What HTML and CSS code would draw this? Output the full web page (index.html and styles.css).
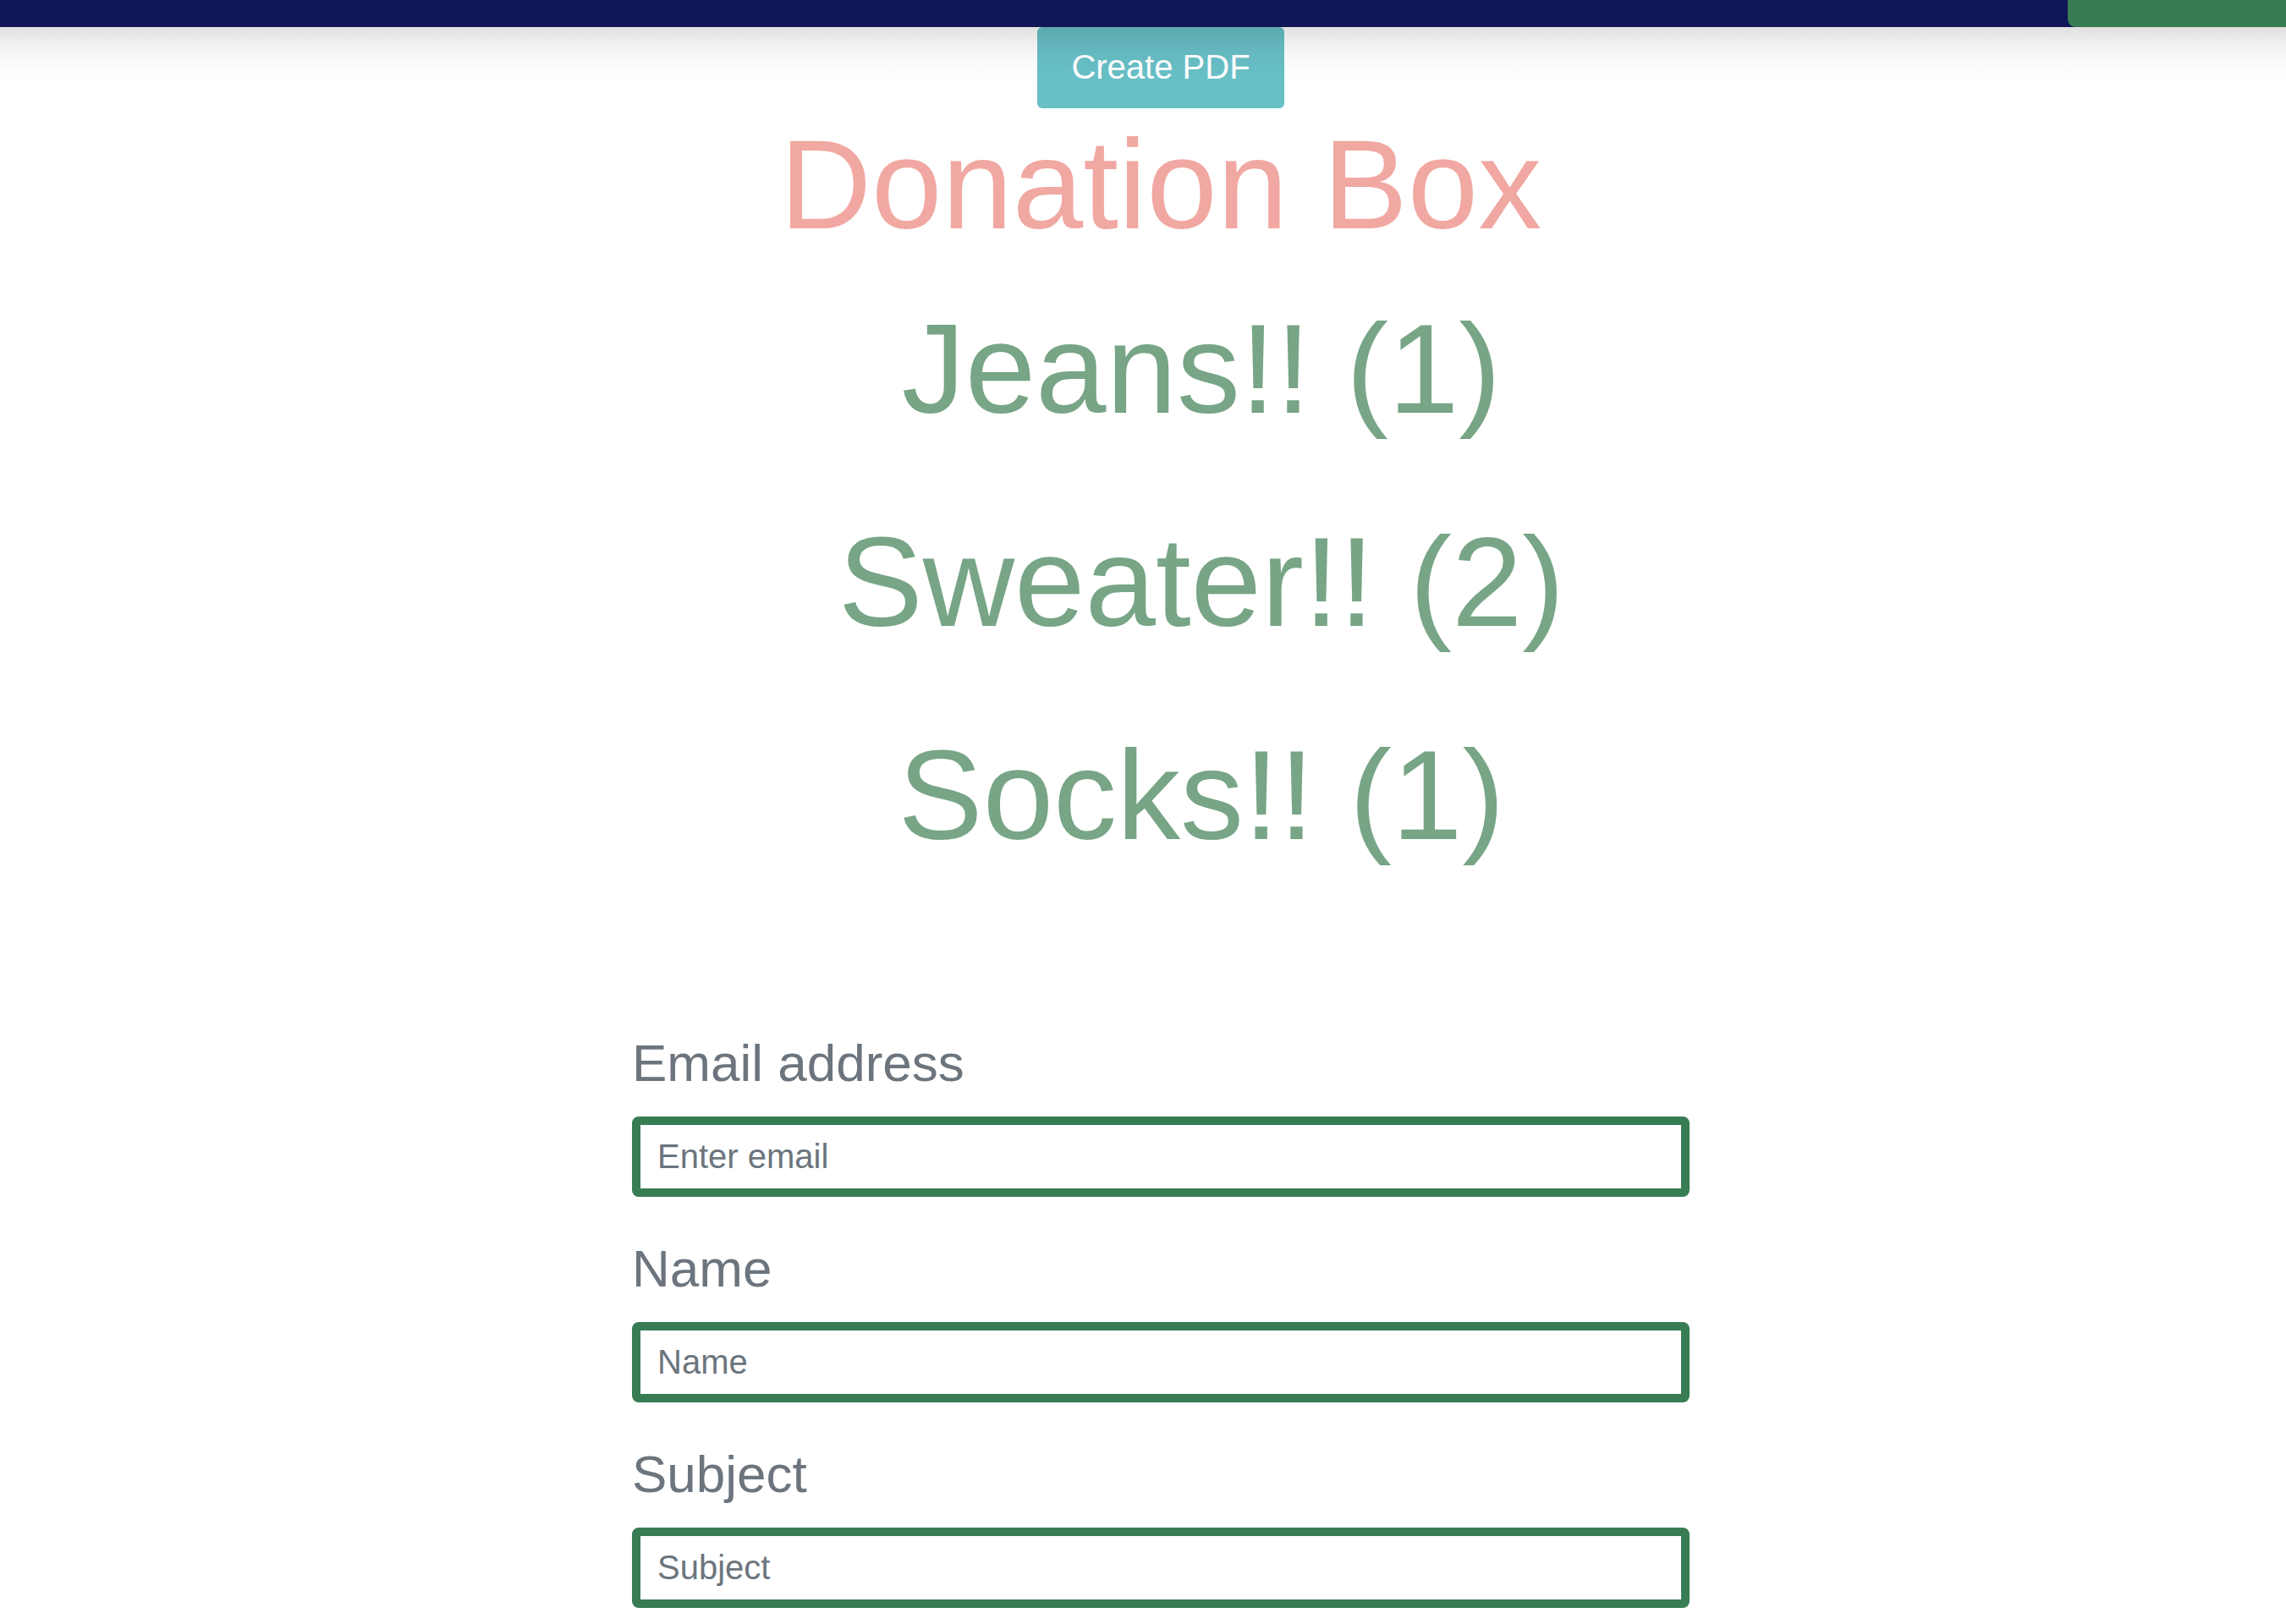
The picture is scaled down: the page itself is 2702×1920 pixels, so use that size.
FILE: index.html
```html
<!DOCTYPE html>
<html lang="en">
<head>
<meta charset="utf-8">
<title>Donation Box</title>
<link rel="stylesheet" href="styles.css">
</head>
<body>
<header class="topbar">
  <div class="topbar-action"></div>
</header>
<main class="page">
  <button class="pdf-btn" type="button">Create PDF</button>
  <h1 class="title">Donation Box</h1>
  <ul class="items">
    <li>Jeans!! (1)</li>
    <li>Sweater!! (2)</li>
    <li>Socks!! (1)</li>
  </ul>
  <form class="contact">
    <div class="field">
      <label for="email">Email address</label>
      <input id="email" type="email" placeholder="Enter email">
    </div>
    <div class="field">
      <label for="name">Name</label>
      <input id="name" type="text" placeholder="Name">
    </div>
    <div class="field">
      <label for="subject">Subject</label>
      <input id="subject" type="text" placeholder="Subject">
    </div>
  </form>
</main>
</body>
</html>
```

FILE: styles.css
```css
html, body {
  margin: 0;
  padding: 0;
  background: #ffffff;
  font-family: "Liberation Sans", Arial, Helvetica, sans-serif;
}

.topbar {
  position: relative;
  z-index: 2;
  height: 32px;
  background: #101656;
  display: flex;
  justify-content: flex-end;
}

.topbar::after {
  content: "";
  position: absolute;
  left: 0;
  right: 0;
  top: 100%;
  height: 66px;
  pointer-events: none;
  background: linear-gradient(
    to bottom,
    rgba(0, 0, 0, 0.122) 0px,
    rgba(0, 0, 0, 0.063) 18px,
    rgba(0, 0, 0, 0.027) 35px,
    rgba(0, 0, 0, 0.008) 51px,
    rgba(0, 0, 0, 0) 66px
  );
}

.topbar-action {
  width: 258px;
  height: 32px;
  background: #387c54;
  border-bottom-left-radius: 9px;
}

.page {
  padding-left: 42px;
  display: flex;
  flex-direction: column;
  align-items: center;
}

.pdf-btn {
  width: 292px;
  height: 96px;
  margin: 0;
  padding: 0 0 3px;
  border: none;
  border-radius: 6px;
  background: #68bfc6;
  color: #ffffff;
  font-family: "Liberation Sans", Arial, Helvetica, sans-serif;
  font-size: 40px;
  line-height: 1;
}

.title {
  margin: 4px 0 0;
  font-size: 150px;
  line-height: 172px;
  font-weight: normal;
  color: #f1a8a2;
}

.items {
  align-self: stretch;
  margin: 46px 0 0;
  padding: 0 0 0 96px;
  list-style: none;
  display: flex;
  flex-direction: column;
  gap: 80px;
  text-align: center;
  font-size: 150px;
  line-height: 172px;
  color: #77a586;
}

.contact {
  width: 1250px;
  margin-top: 194px;
}

.field {
  margin-bottom: 48px;
}

.field label {
  display: block;
  margin-bottom: 27px;
  font-size: 62px;
  line-height: 73px;
  color: #6c757d;
}

.field input {
  display: block;
  box-sizing: border-box;
  width: 100%;
  height: 95px;
  margin: 0;
  padding: 0 20px;
  border: 10px solid #387c54;
  border-radius: 8px;
  background: #ffffff;
  font-family: "Liberation Sans", Arial, Helvetica, sans-serif;
  font-size: 40px;
  color: #495057;
  outline: none;
}

.field input::placeholder {
  color: #6c757d;
  opacity: 1;
}
```
